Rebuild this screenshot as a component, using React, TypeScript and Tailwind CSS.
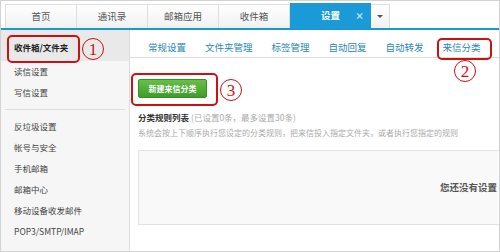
import React from "react";

const cjk = { fontFamily: '"Noto Sans CJK SC", "Liberation Sans", sans-serif' };

function Circled({ n, className }: { n: string; className: string }) {
  return (
    <div
      className={`absolute w-[22px] h-[22px] rounded-full border-[1.5px] border-[#cc1111] text-[#cc1111] flex items-center justify-center text-[17px] leading-none ${className}`}
      style={{ fontFamily: '"Liberation Serif", serif' }}
    >
      {n}
    </div>
  );
}

export default function App() {
  const tabs = ["首页", "通讯录", "邮箱应用", "收件箱"];
  const subtabs = ["常规设置", "文件夹管理", "标签管理", "自动回复", "自动转发", "来信分类"];
  const side2 = ["反垃圾设置", "帐号与安全", "手机邮箱", "邮箱中心", "移动设备收发邮件", "POP3/SMTP/IMAP"];
  return (
    <div className="relative w-[500px] h-[252px] bg-white overflow-hidden border border-[#d2d2d2]" style={cjk}>
      {/* top tab bar */}
      <div className="h-[29px] flex items-end pl-[4px] border-b-2 border-[#1a97d5]">
        {tabs.map((t) => (
          <div
            key={t}
            className="h-[24px] w-[72px] border border-b-0 border-[#dedede] -ml-px first:ml-0 bg-gradient-to-b from-white to-[#f1f1f1] text-[9.5px] text-[#555] flex items-center justify-center"
          >
            {t}
          </div>
        ))}
        <div className="relative h-[25px] w-[81px] bg-[#1a9ad6] text-white font-bold text-[9.5px] flex items-center justify-center">
          设置
          <span className="absolute right-[7px] top-[6px] text-[9px] text-[#cfe9f6] font-bold">×</span>
        </div>
        <div className="h-[24px] w-[19px] border border-b-0 border-l-0 border-[#dedede] bg-gradient-to-b from-white to-[#f1f1f1] flex items-center justify-center">
          <div className="w-0 h-0 border-l-[3px] border-r-[3px] border-t-[3px] border-l-transparent border-r-transparent border-t-[#555]" />
        </div>
      </div>

      {/* body */}
      <div className="flex h-[222px]">
        {/* sidebar */}
        <div className="w-[129px] shrink-0 bg-[#f6f6f6] border-r border-[#dcdcdc] text-[8.5px] text-[#444]">
          <div className="h-[31px] pt-[4px] bg-[#e9e9e9] flex items-center pl-[13px] font-bold text-[#222]">
            收件箱/文件夹
          </div>
          <div className="h-[21px] flex items-center pl-[13px]">读信设置</div>
          <div className="h-[21px] flex items-center pl-[13px]">写信设置</div>
          <div className="mt-[6px] mx-[4px] border-t border-[#dddddd]" />
          <div className="mt-[6px]">
            {side2.map((s) => (
              <div key={s} className="h-[21px] flex items-center pl-[13px]">
                {s}
              </div>
            ))}
          </div>
        </div>

        {/* main */}
        <div className="flex-1 min-w-0">
          <div className="h-[28px] border-b border-[#dcdcdc] flex items-center pt-[8px] pl-[8.5px]">
            {subtabs.map((s) => (
              <div key={s} className="px-[9.5px] text-[9.5px] text-[#2a87b9] whitespace-nowrap">
                {s}
              </div>
            ))}
          </div>
          <div className="pl-[8px]">
            <div className="mt-[21px] w-[69px] h-[19px] rounded-[2px] border border-[#3b8d27] bg-gradient-to-b from-[#66bf45] to-[#3f9c2b] text-white font-bold text-[8px] flex items-center justify-center">
              新建来信分类
            </div>
            <div className="mt-[13px] h-[12px] flex items-center text-[8.5px] whitespace-nowrap">
              <span className="font-bold text-[#333]">分类规则列表</span>
              <span className="text-[#aaa] ml-[2px]">(已设置0条，最多设置30条)</span>
            </div>
            <div className="mt-[4px] h-[12px] flex items-center text-[8px] text-[#aaa] whitespace-nowrap">
              系统会按上下顺序执行您设定的分类规则，把来信投入指定文件夹，或者执行您指定的规则
            </div>
            <div className="mt-[11px] w-[500px] h-[75px] bg-[#f9f9f9] border border-[#e2e2e2] flex items-center pl-[301px] text-[9.5px] font-bold text-[#555] whitespace-nowrap">
              您还没有设置
            </div>
          </div>
        </div>
      </div>

      {/* annotations */}
      <div className="absolute left-[6px] top-[34px] w-[73px] h-[28px] border-2 border-[#cc1111] rounded-[5px]" />
      <Circled n="1" className="left-[81px] top-[37px]" />
      <div className="absolute left-[436px] top-[37px] w-[55px] h-[22px] border-2 border-[#cc1111] rounded-[5px]" />
      <Circled n="2" className="left-[453px] top-[59px]" />
      <div className="absolute left-[130px] top-[72px] w-[87px] h-[33px] border-2 border-[#cc1111] rounded-[5px]" />
      <Circled n="3" className="left-[219px] top-[78px]" />
    </div>
  );
}
